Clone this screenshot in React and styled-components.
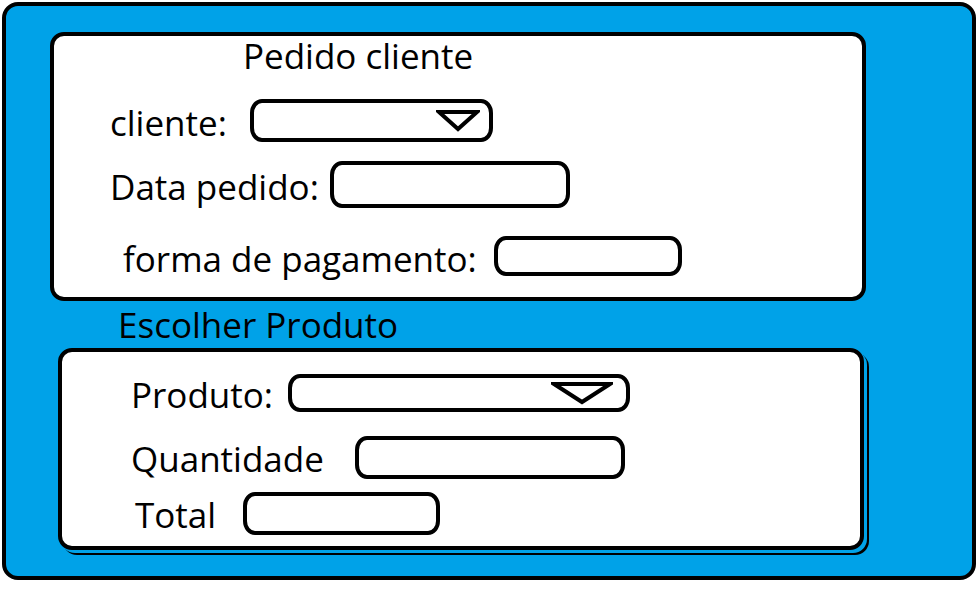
import React from "react";
import styled, { createGlobalStyle } from "styled-components";

const GlobalStyle = createGlobalStyle`
	body {
		margin: 0;
		background: #ffffff;
		font-family: "Open Sans", "Noto Sans", sans-serif;
	}
`;

const Arrow = ({ w, h }) => (
	<svg width={w} height={h} viewBox={`0 0 ${w} ${h}`}>
		<polygon
			points={`3,3 ${w - 3},3 ${w / 2},${h - 3}`}
			fill="#fff"
			stroke="#000"
			strokeWidth="4"
			strokeLinejoin="miter"
		/>
	</svg>
);

const App = () => {
	return (
		<>
			<GlobalStyle />
			<Frame>
				<Panel $w={816} $h={269} $ml={0}>
					<Title>Pedido cliente</Title>

					<Row $mt={23} $pl={56}>
						<Label $w={140}>cliente:</Label>
						<Select $w={243} $h={43} $pr={9}>
							<Arrow w={44} h={23} />
						</Select>
					</Row>

					<Row $mt={19} $pl={56}>
						<Label $w={220}>Data pedido:</Label>
						<Field $w={240} $h={47} />
					</Row>

					<Row $mt={28} $pl={69}>
						<Label $w={371}>forma de pagamento:</Label>
						<Field $w={188} $h={40} />
					</Row>
				</Panel>

				<Section>Escolher Produto</Section>

				<Panel $w={806} $h={202} $ml={8} $double>
					<Row $mt={21} $pl={69}>
						<Label $w={157}>Produto:</Label>
						<Select $w={342} $h={38} $pr={13}>
							<Arrow w={62} h={24} />
						</Select>
					</Row>

					<Row $mt={24} $pl={69}>
						<Label $w={224} $shift={-2}>Quantidade</Label>
						<Field $w={270} $h={43} />
					</Row>

					<Row $mt={13} $pl={73}>
						<Label $w={108} $shift={-2}>Total</Label>
						<Field $w={197} $h={43} />
					</Row>
				</Panel>
			</Frame>
		</>
	);
};

export default App;

const Frame = styled.div`
	box-sizing: border-box;
	margin: 2px 0 0 2px;
	width: 974px;
	height: 578px;
	border: 4px solid #000;
	border-radius: 16px;
	background-color: #00a2e8;
	padding: 26px 0 0 44px;
`;

const Panel = styled.div`
	box-sizing: border-box;
	width: ${(p) => p.$w}px;
	height: ${(p) => p.$h}px;
	margin-left: ${(p) => p.$ml}px;
	border: 4px solid #000;
	border-radius: 14px;
	background-color: #fff;
	box-shadow: ${(p) =>
		p.$double ? "3px 3px 0 0 #00a2e8, 5px 5px 0 0 #000" : "none"};
`;

const Title = styled.div`
	height: 40px;
	line-height: 40px;
	padding-left: 189px;
	font-size: 35px;
	color: #000;
`;

const Section = styled.div`
	height: 47px;
	line-height: 47px;
	margin-left: 68px;
	font-size: 35px;
	color: #000;
`;

const Row = styled.div`
	display: flex;
	align-items: center;
	margin-top: ${(p) => p.$mt}px;
	padding-left: ${(p) => p.$pl}px;
`;

const Label = styled.div`
	width: ${(p) => p.$w}px;
	flex-shrink: 0;
	font-size: 35px;
	line-height: 1;
	padding-top: 4px;
	margin-top: ${(p) => p.$shift || 0}px;
	color: #000;
	white-space: nowrap;
`;

const Field = styled.div`
	box-sizing: border-box;
	width: ${(p) => p.$w}px;
	height: ${(p) => p.$h}px;
	border: 4px solid #000;
	border-radius: 12px / 14px;
	background-color: #fff;
`;

const Select = styled(Field)`
	display: flex;
	align-items: center;
	justify-content: flex-end;
	padding-right: ${(p) => p.$pr}px;
`;
